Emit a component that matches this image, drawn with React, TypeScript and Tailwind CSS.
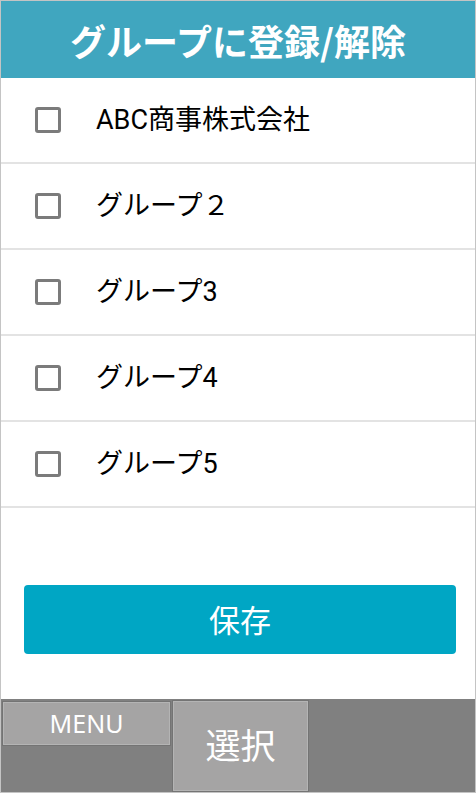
import React, { useState } from "react";

const groups = ["ABC商事株式会社", "グループ２", "グループ3", "グループ4", "グループ5"];

const font = { fontFamily: '"Noto Sans CJK JP", Roboto, sans-serif' };

function GroupRow({ label }: { label: string }) {
  const [checked, setChecked] = useState(false);
  return (
    <label className="box-border flex h-[86px] cursor-pointer items-center border-b-2 border-[#e3e3e3]">
      <span
        onClick={() => setChecked(!checked)}
        className="ml-[34px] box-border h-[26px] w-[26px] rounded-[3px] border-[3px] border-[#7b7b7b] bg-white"
      />
      <span
        className="ml-[35px] text-[27px] leading-none text-black"
        style={{ fontFamily: 'Roboto, "Noto Sans CJK JP", sans-serif' }}
      >
        {label}
      </span>
    </label>
  );
}

export default function App() {
  return (
    <div
      className="box-border flex h-[793px] w-[476px] flex-col border border-[#c4c4c4] bg-white"
      style={font}
    >
      <div className="flex h-[77px] shrink-0 items-center justify-center bg-[#40a6bf]">
        <h1 className="text-[36px] font-bold leading-none text-white">グループに登録/解除</h1>
      </div>

      <div className="flex flex-col">
        {groups.map((g) => (
          <GroupRow key={g} label={g} />
        ))}
      </div>

      <div className="pl-[23px] pr-[19px] pt-[77px]">
        <button className="flex h-[69px] w-full items-center justify-center rounded-[4px] bg-[#00a6c4] text-[31px] text-white">
          保存
        </button>
      </div>

      <div className="mt-auto flex h-[93px] shrink-0 items-start gap-[3px] bg-[#808080] px-[2px] pt-[2px]">
        <button
          className="mt-[1px] flex h-[43px] w-[167px] items-center justify-center border border-[#b4b4b4] bg-[#a5a4a4] text-[25px] leading-none text-white shadow-[0_0_0_1px_#747474]"
          style={{ fontFamily: '"Noto Sans", sans-serif' }}
        >
          MENU
        </button>
        <button className="flex h-[90px] w-[135px] items-center justify-center border border-[#b4b4b4] bg-[#a5a4a4] pb-[6px] text-[35px] leading-none text-white shadow-[0_0_0_1px_#747474]">
          選択
        </button>
      </div>
    </div>
  );
}
